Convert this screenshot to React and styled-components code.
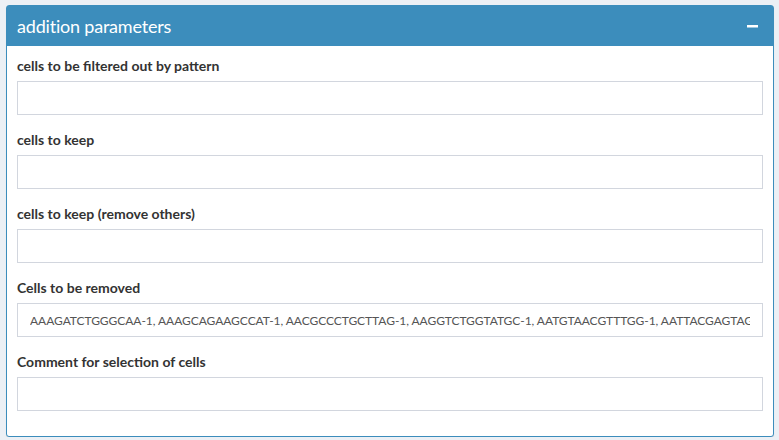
import React from "react";
import styled, { createGlobalStyle } from "styled-components";

const Global = createGlobalStyle`
  html, body { margin: 0; padding: 0; background: #ecf0f5; }
  body { font-family: "Lato", "Liberation Sans", sans-serif; color: #333; }
  * { box-sizing: border-box; }
`;

const Page = styled.div`
  padding: 5px 5px 0 6px;
`;

const Box = styled.div`
  width: 768px;
  background: #fff;
  border: 1px solid #3c8dbc;
  border-radius: 3px;
  box-shadow: 0 1px 1px rgba(0, 0, 0, 0.1);
`;

const Header = styled.div`
  height: 40px;
  background: #3c8dbc;
  color: #fff;
  display: flex;
  align-items: center;
  justify-content: space-between;
  padding: 0 10px;
`;

const Title = styled.h3`
  margin: 0;
  font-size: 18px;
  font-weight: 400;
  line-height: 1;
  letter-spacing: -0.2px;
`;

const ToolButton = styled.button`
  background: transparent;
  border: 0;
  padding: 0 5px;
  height: 20px;
  display: flex;
  align-items: center;
  cursor: pointer;
`;

const Body = styled.div`
  padding: 10px;
`;

const Group = styled.div`
  margin-bottom: 15px;
`;

const Label = styled.label`
  display: block;
  font-size: 14px;
  font-weight: 700;
  line-height: 20px;
  margin-bottom: 5px;
  color: #333;
`;

const Input = styled.input`
  display: block;
  width: 100%;
  height: 34px;
  border: 1px solid #d2d6de;
  border-radius: 0;
  padding: 6px 12px;
  font-family: "Lato", "Liberation Sans", sans-serif;
  font-size: 12px;
  letter-spacing: -0.05px;
  color: #555;
  background: #fff;
  outline: none;
`;

const fields = [
  { label: "cells to be filtered out by pattern", value: "" },
  { label: "cells to keep", value: "" },
  { label: "cells to keep (remove others)", value: "" },
  {
    label: "Cells to be removed",
    value:
      "AAAGATCTGGGCAA-1, AAAGCAGAAGCCAT-1, AACGCCCTGCTTAG-1, AAGGTCTGGTATGC-1, AATGTAACGTTTGG-1, AATTACGAGTAGCT-1",
  },
  { label: "Comment for selection of cells", value: "" },
];

export default function App() {
  return (
    <>
      <Global />
      <Page>
        <Box>
          <Header>
            <Title>addition parameters</Title>
            <ToolButton aria-label="collapse">
              <svg width="11" height="3" viewBox="0 0 11 3">
                <rect x="0" y="0" width="11" height="2.5" fill="#fff" />
              </svg>
            </ToolButton>
          </Header>
          <Body>
            {fields.map((f) => (
              <Group key={f.label}>
                <Label>{f.label}</Label>
                <Input type="text" defaultValue={f.value} readOnly />
              </Group>
            ))}
          </Body>
        </Box>
      </Page>
    </>
  );
}
